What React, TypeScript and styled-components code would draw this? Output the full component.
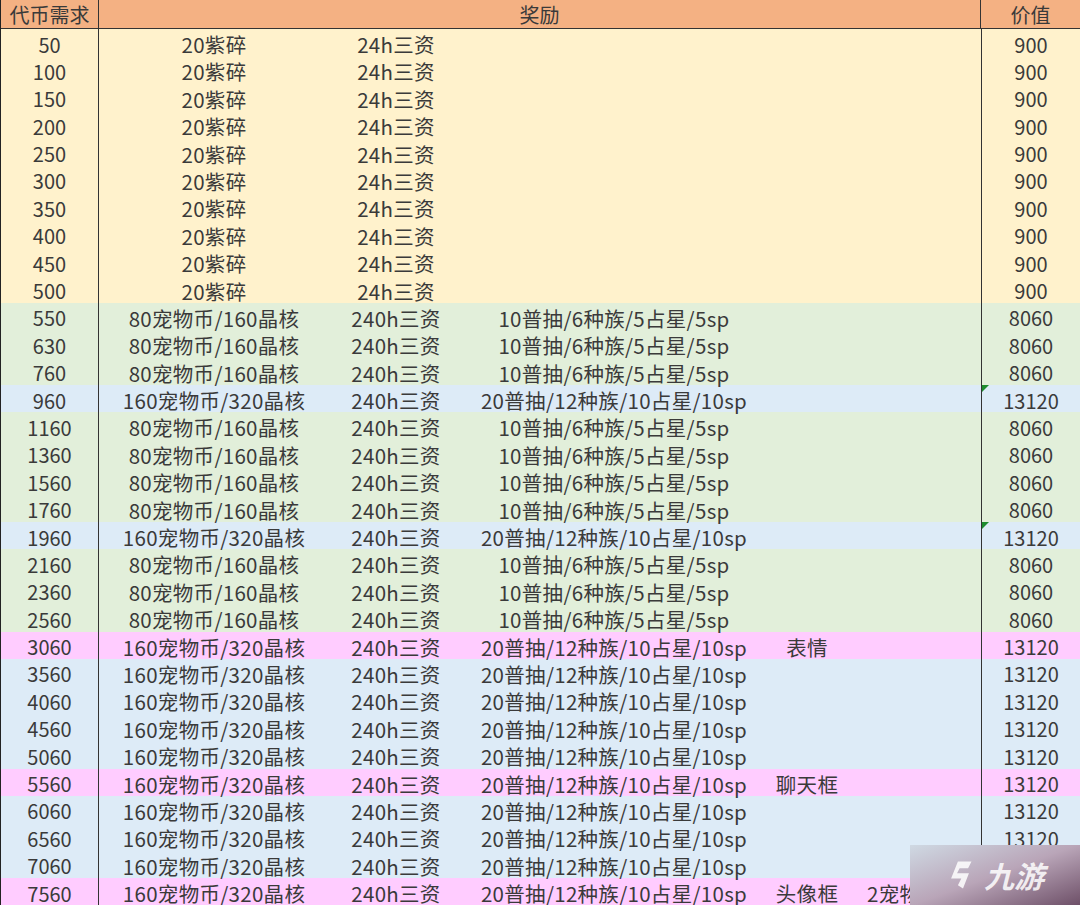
import React from "react";
import styled, { createGlobalStyle } from "styled-components";

const Global = createGlobalStyle`
  body { margin: 0; background: #fff; font-family: "Noto Sans CJK SC", "Noto Sans", sans-serif; }
`;

type Kind = "y" | "g" | "b" | "p";
const fills: Record<Kind, string> = { y: "#fff2cc", g: "#e2efda", b: "#ddebf7", p: "#ffccff" };

const small = ["80宠物币/160晶核", "240h三资", "10普抽/6种族/5占星/5sp"];
const big = ["160宠物币/320晶核", "240h三资", "20普抽/12种族/10占星/10sp"];

type Row = { n: number; k: Kind; r: string[]; v: number; mark?: boolean };
const rows: Row[] = [
  ...[50, 100, 150, 200, 250, 300, 350, 400, 450, 500].map((n) => ({ n, k: "y" as Kind, r: ["20紫碎", "24h三资"], v: 900 })),
  ...[550, 630, 760].map((n) => ({ n, k: "g" as Kind, r: small, v: 8060 })),
  { n: 960, k: "b", r: big, v: 13120, mark: true },
  ...[1160, 1360, 1560, 1760].map((n) => ({ n, k: "g" as Kind, r: small, v: 8060 })),
  { n: 1960, k: "b", r: big, v: 13120, mark: true },
  ...[2160, 2360, 2560].map((n) => ({ n, k: "g" as Kind, r: small, v: 8060 })),
  { n: 3060, k: "p", r: [...big, "表情"], v: 13120 },
  ...[3560, 4060, 4560, 5060].map((n) => ({ n, k: "b" as Kind, r: big, v: 13120 })),
  { n: 5560, k: "p", r: [...big, "聊天框"], v: 13120 },
  ...[6060, 6560, 7060].map((n) => ({ n, k: "b" as Kind, r: big, v: 13120 })),
  { n: 7560, k: "p", r: [...big, "头像框", "2宠物皮肤"], v: 13120 },
];

export default function App() {
  return (
    <Page>
      <Global />
      <Header>
        <HCell>代币需求</HCell>
        <HCell $mid>奖励</HCell>
        <HCell>价值</HCell>
      </Header>
      {rows.map((row) => (
        <Line key={row.n} $bg={fills[row.k]}>
          <Cell>{row.n}</Cell>
          <Reward>
            {row.r.map((t, i) => (
              <Sub key={i} $last={i === 4}>{t}</Sub>
            ))}
          </Reward>
          <Cell $right>
            {row.mark && <Mark />}
            {row.v}
          </Cell>
        </Line>
      ))}
      <Watermark>
        <Logo viewBox="0 0 40 40">
          <path d="M14 4 L30 4 L26 12 L16 12 L13 18 L27 18 L20 36 L14 32 L18 24 L6 24 Z" fill="rgba(255,255,255,0.85)" />
        </Logo>
        <WText>九游</WText>
      </Watermark>
    </Page>
  );
}

const Page = styled.div`
  position: relative;
  width: 1080px;
  height: 905px;
  overflow: hidden;
  border-left: 1px solid #222;
  box-sizing: border-box;
`;

const Header = styled.div`
  display: grid;
  grid-template-columns: 97px 883px 1fr;
  height: 28px;
  background: #f4b183;
  border-bottom: 1px solid #333;
`;

const HCell = styled.div<{ $mid?: boolean }>`
  display: flex;
  align-items: center;
  justify-content: center;
  font-size: 20px;
  color: #3a3a3a;
  border-left: ${(p) => (p.$mid ? "1px solid #333" : "none")};
  border-right: ${(p) => (p.$mid ? "1px solid #333" : "none")};
`;

const Line = styled.div<{ $bg: string }>`
  display: grid;
  grid-template-columns: 97px 883px 1fr;
  height: 27.4px;
  background: ${(p) => p.$bg};
`;

const Cell = styled.div<{ $right?: boolean }>`
  position: relative;
  display: flex;
  align-items: center;
  justify-content: center;
  font-size: 20px;
  color: #3a3a3a;
  border-left: ${(p) => (p.$right ? "1px solid #333" : "none")};
`;

const Reward = styled.div`
  display: grid;
  grid-template-columns: 230px 134px 302px 84px 1fr;
  border-left: 1px solid #333;
`;

const Sub = styled.div<{ $last?: boolean }>`
  display: flex;
  align-items: center;
  justify-content: ${(p) => (p.$last ? "flex-start" : "center")};
  padding-left: ${(p) => (p.$last ? "18px" : "0")};
  font-size: 20.5px;
  letter-spacing: 0.3px;
  color: #3a3a3a;
  white-space: nowrap;
  overflow: hidden;
`;

const Mark = styled.span`
  position: absolute;
  left: 0;
  top: 0;
  width: 0;
  height: 0;
  border-top: 7px solid #1e8c2e;
  border-right: 7px solid transparent;
`;

const Watermark = styled.div`
  position: absolute;
  right: 0;
  bottom: 0;
  width: 170px;
  height: 60px;
  display: flex;
  align-items: center;
  justify-content: center;
  gap: 4px;
  background: linear-gradient(160deg, #cfd9e3 0%, #b9a5b8 50%, #6e5068 100%);
`;

const Logo = styled.svg`
  width: 34px;
  height: 34px;
`;

const WText = styled.span`
  font-size: 30px;
  font-style: italic;
  font-weight: 700;
  color: rgba(255, 255, 255, 0.85);
`;
